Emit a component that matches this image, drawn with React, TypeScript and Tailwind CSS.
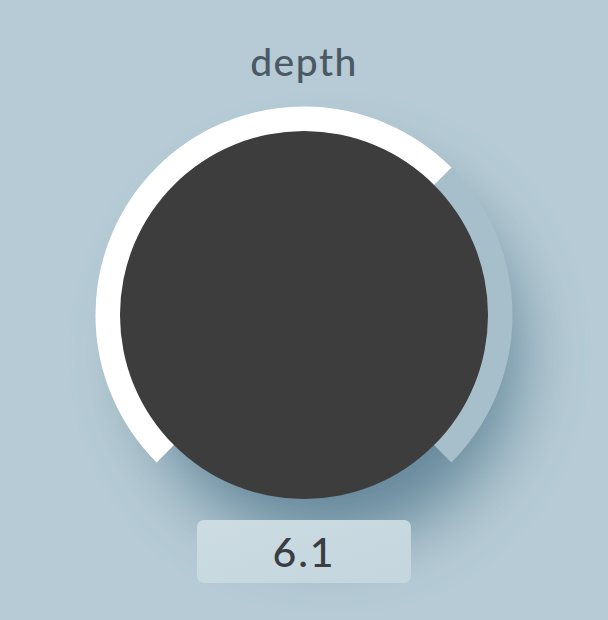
import React from "react";

const SIZE = 416;
const C = SIZE / 2;
const TRACK_R = 196;
const START = -135;
const END = 135;

const polar = (deg: number, r: number) => {
  const a = (deg * Math.PI) / 180;
  return { x: C + r * Math.sin(a), y: C - r * Math.cos(a) };
};

const arc = (from: number, to: number, r: number) => {
  const a = polar(from, r);
  const b = polar(to, r);
  const large = to - from > 180 ? 1 : 0;
  return `M ${a.x} ${a.y} A ${r} ${r} 0 ${large} 1 ${b.x} ${b.y}`;
};

function Knob({ fill }: { fill: number }) {
  const at = START + (END - START) * fill;
  return (
    <svg width={SIZE} height={SIZE} viewBox={`0 0 ${SIZE} ${SIZE}`} className="overflow-visible">
      <defs>
        <filter id="knob-blur" x="-60%" y="-60%" width="220%" height="220%">
          <feGaussianBlur stdDeviation="34" />
        </filter>
      </defs>
      {/* soft shadow under the cap, drawn first so the track stays clean */}
      <circle cx={C + 26} cy={C + 38} r={188} fill="#577c90" opacity={0.85} filter="url(#knob-blur)" />
      <path d={arc(at, END, TRACK_R)} stroke="#a7bfcb" strokeWidth={25} fill="none" />
      <path d={arc(START, at, TRACK_R)} stroke="#ffffff" strokeWidth={25} fill="none" />
      <circle cx={C} cy={C} r={184} fill="#3d3d3d" />
    </svg>
  );
}

export default function App() {
  return (
    <div
      className="w-[608px] h-[620px] overflow-hidden bg-[#b6cbd5] flex flex-col items-center"
      style={{ fontFamily: "Lato, 'Noto Sans', sans-serif" }}
    >
      <div className="mt-[37px] h-[48px] leading-[48px] text-[39px] font-medium text-[#4a5964] tracking-[1.5px]">
        depth
      </div>
      <div className="mt-[22px]">
        <Knob fill={0.6667} />
      </div>
      <div className="relative -mt-[3px] w-[214px] h-[63px] rounded-[7px] bg-gradient-to-br from-[#cddce3] to-[#c4d5dd] flex items-center justify-center text-[41px] font-medium text-[#3a3e42] tracking-[2px]">
        6.1
      </div>
    </div>
  );
}
